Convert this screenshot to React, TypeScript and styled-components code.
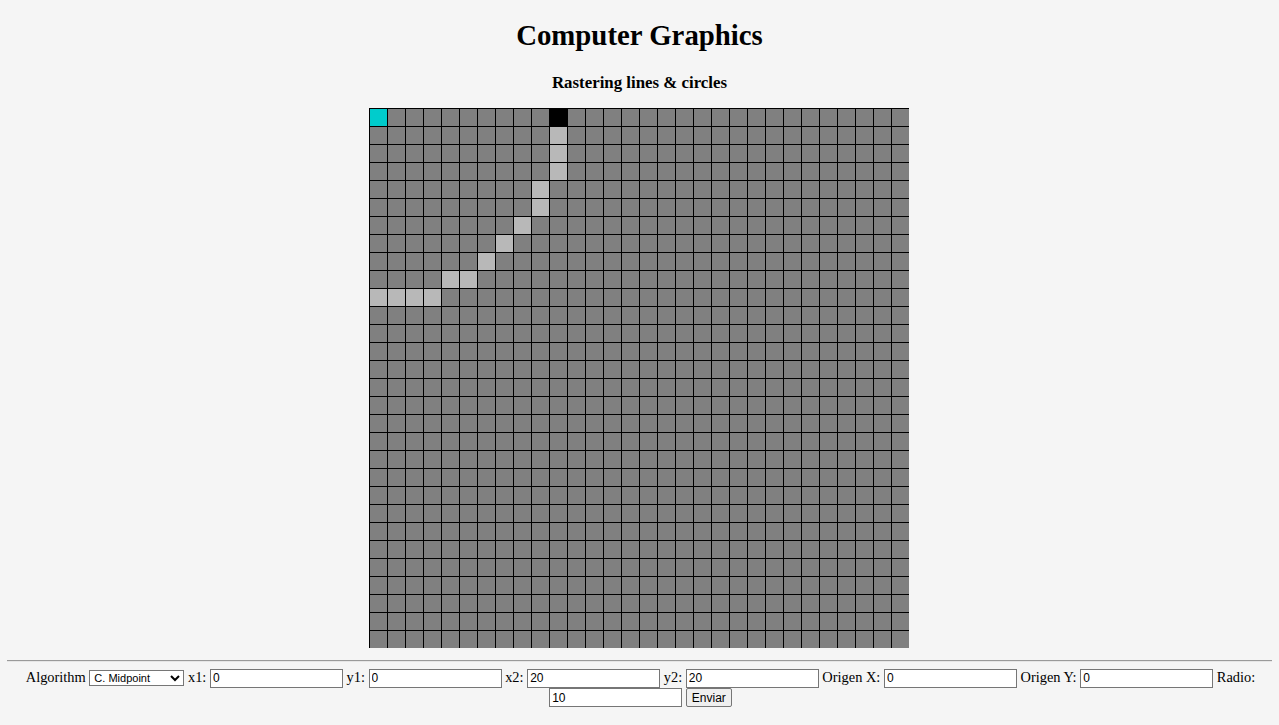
import React, { useMemo } from "react";
import styled, { createGlobalStyle } from "styled-components";

const GlobalStyle = createGlobalStyle`
  html, body {
    background: #f5f5f5;
  }
  body {
    margin: 7px;
    font-family: "Liberation Serif", "Times New Roman", serif;
    font-size: 14.4px;
    color: #000;
  }
`;

const Page = styled.div`
  text-align: center;
`;

const Title = styled.h1`
  font-size: 28.8px;
  font-weight: bold;
  margin: 12px 0 0;
  line-height: 33px;
`;

const Subtitle = styled.h3`
  font-size: 16.85px;
  font-weight: bold;
  margin: 21px 0 0;
  line-height: 19px;
`;

const BoardRow = styled.div`
  display: flex;
  justify-content: center;
  margin-top: 16px;
  padding-right: 2px;
`;

const Board = styled.div`
  display: grid;
  grid-template-columns: repeat(30, 17px);
  grid-auto-rows: 17px;
  gap: 1px;
  padding: 1px 0 0 1px;
  background: #000;
`;

type Kind = "empty" | "origin" | "end" | "line";

const colors: Record<Kind, string> = {
  empty: "#808080",
  origin: "#00cccc",
  end: "#000000",
  line: "#b8b8b8",
};

const Cell = styled.div<{ $kind: Kind }>`
  background: ${(p) => colors[p.$kind]};
`;

const Divider = styled.hr`
  margin: 12px 0 0;
  border: none;
  border-top: 1px solid #9a9a9a;
  border-bottom: 1px solid #e6e6e6;
  height: 0;
`;

const Form = styled.form`
  text-align: center;
  font-size: 14.4px;
  line-height: 19px;
  margin-top: 6px;
  padding-left: 2px;
`;

const Select = styled.select`
  font-family: "Liberation Sans", Arial, sans-serif;
  font-size: 11px;
  width: 95px;
  height: 16px;
  box-sizing: border-box;
  border: 1px solid #767676;
  border-radius: 0;
  background: #fff;
  padding: 0;
  vertical-align: baseline;
`;

const Input = styled.input`
  font-family: "Liberation Sans", Arial, sans-serif;
  font-size: 12px;
  width: 133px;
  height: 19px;
  box-sizing: border-box;
  border: 1px solid #767676;
  padding: 1px 2px;
  background: #fff;
  vertical-align: baseline;
`;

const Button = styled.button`
  font-family: "Liberation Sans", Arial, sans-serif;
  font-size: 12px;
  height: 19px;
  box-sizing: border-box;
  padding: 0 5px;
  border: 1px solid #767676;
  border-radius: 2px;
  background: #efefef;
  vertical-align: baseline;
`;

const circlePts: [number, number][] = [
  [10, 1], [10, 2], [10, 3], [9, 4], [9, 5], [8, 6], [7, 7],
  [6, 8], [5, 9], [4, 9], [3, 10], [2, 10], [1, 10], [0, 10],
];

export default function App() {
  const cells = useMemo(() => {
    const set = new Set(circlePts.map(([x, y]) => `${x},${y}`));
    const out: Kind[] = [];
    for (let r = 0; r < 30; r++) {
      for (let c = 0; c < 30; c++) {
        let k: Kind = "empty";
        if (r === 0 && c === 0) k = "origin";
        else if (r === 0 && c === 10) k = "end";
        else if (set.has(`${c},${r}`)) k = "line";
        out.push(k);
      }
    }
    return out;
  }, []);

  return (
    <>
      <GlobalStyle />
      <Page>
        <Title>Computer Graphics</Title>
        <Subtitle>Rastering lines &amp; circles</Subtitle>
        <BoardRow>
          <Board>
            {cells.map((k, i) => (
              <Cell key={i} $kind={k} />
            ))}
          </Board>
        </BoardRow>
      </Page>
      <Divider />
      <Form onSubmit={(e) => e.preventDefault()}>
        Algorithm{" "}
        <Select defaultValue="cmid">
          <option value="dda">DDA</option>
          <option value="bres">Bresenham</option>
          <option value="cmid">C. Midpoint</option>
        </Select>{" "}
        x1: <Input defaultValue="0" /> y1: <Input defaultValue="0" /> x2:{" "}
        <Input defaultValue="20" /> y2: <Input defaultValue="20" /> Origen X:{" "}
        <Input defaultValue="0" /> Origen Y: <Input defaultValue="0" /> Radio:{" "}
        <Input defaultValue="10" /> <Button type="submit">Enviar</Button>
      </Form>
    </>
  );
}
